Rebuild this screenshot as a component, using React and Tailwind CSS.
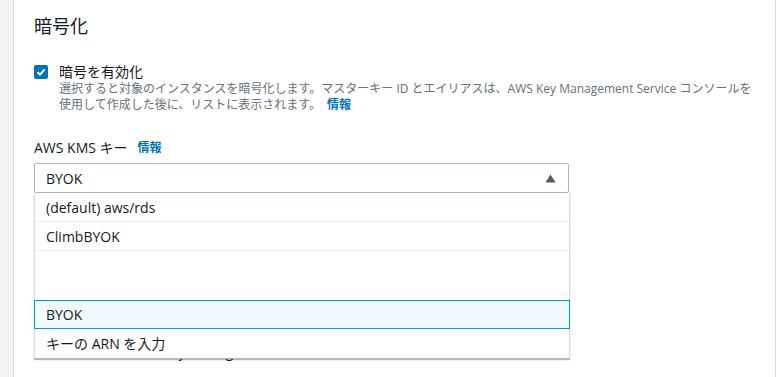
import React from "react";

export default function App() {
  const font = { fontFamily: '"Open Sans", "Noto Sans CJK JP", sans-serif' };
  return (
    <div className="flex w-[776px] h-[377px] overflow-hidden bg-white" style={font}>
      <div className="w-[14px] shrink-0 bg-[#f2f3f3] border-r border-[#d5dbdb]" />
      <div className="flex-1 relative border-r border-[#d5dbdb] pl-[20px] pt-[12px]">
        <h2 className="text-[18px] leading-[28px] text-[#16191f]">暗号化</h2>
        <div className="flex mt-[23px] gap-[11px]">
          <div className="mt-[2px] w-[14px] h-[14px] rounded-[2px] bg-[#0073bb] flex items-center justify-center shrink-0">
            <svg width="10" height="10" viewBox="0 0 10 10">
              <path d="M1.5 5.2 L4 7.6 L8.6 2.4" fill="none" stroke="white" strokeWidth="2" />
            </svg>
          </div>
          <div>
            <div className="text-[14px] leading-[18px] text-[#16191f]">暗号を有効化</div>
            <div className="text-[12px] leading-[16px] text-[#687078] w-[700px]">
              選択すると対象のインスタンスを暗号化します。マスターキー ID とエイリアスは、AWS Key Management Service コンソールを使用して作成した後に、リストに表示されます。
              <span className="ml-[6px] text-[#0073bb] font-semibold">情報</span>
            </div>
          </div>
        </div>
        <div className="mt-[25px] text-[14px] leading-[20px] text-[#16191f] flex items-center gap-[10px]">
          <span>AWS KMS キー</span>
          <span className="text-[12px] text-[#0073bb] font-semibold">情報</span>
        </div>
        <div className="relative w-[535px] mt-[5px]">
          <div className="h-[30px] border border-[#aab7b8] rounded-[2px] flex items-center justify-between pl-[11px] pr-[12px] text-[14px] text-[#16191f]">
            <span>BYOK</span>
            <svg width="11" height="9" viewBox="0 0 11 9"><path d="M5.5 0.5 L10.5 8.5 L0.5 8.5 Z" fill="#545b64" /></svg>
          </div>
          <div className="absolute left-0 top-[30px] w-[536px] bg-white border-x border-[#d5dbdb] border-b border-b-[#aab7b8] shadow-[0_1px_1px_rgba(0,28,36,0.3)] text-[14px] text-[#16191f] z-10">
            <div className="h-[29px] flex items-center pl-[11px] border-b border-[#eaeded]">(default) aws/rds</div>
            <div className="h-[29px] flex items-center pl-[11px] border-b border-[#eaeded]">ClimbBYOK</div>
            <div className="h-[49px]" />
            <div className="h-[29px] flex items-center pl-[11px] border border-[#00a1c9] bg-[#f1faff] -mx-px">BYOK</div>
            <div className="h-[29px] flex items-center pl-[11px]">キーの ARN を入力</div>
          </div>
          <div className="mt-[149px] pl-[128px] text-[14px] leading-[20px] text-[#16191f]">Key Management <span className="text-[12px] text-[#0073bb]">情報</span></div>
        </div>
      </div>
    </div>
  );
}
